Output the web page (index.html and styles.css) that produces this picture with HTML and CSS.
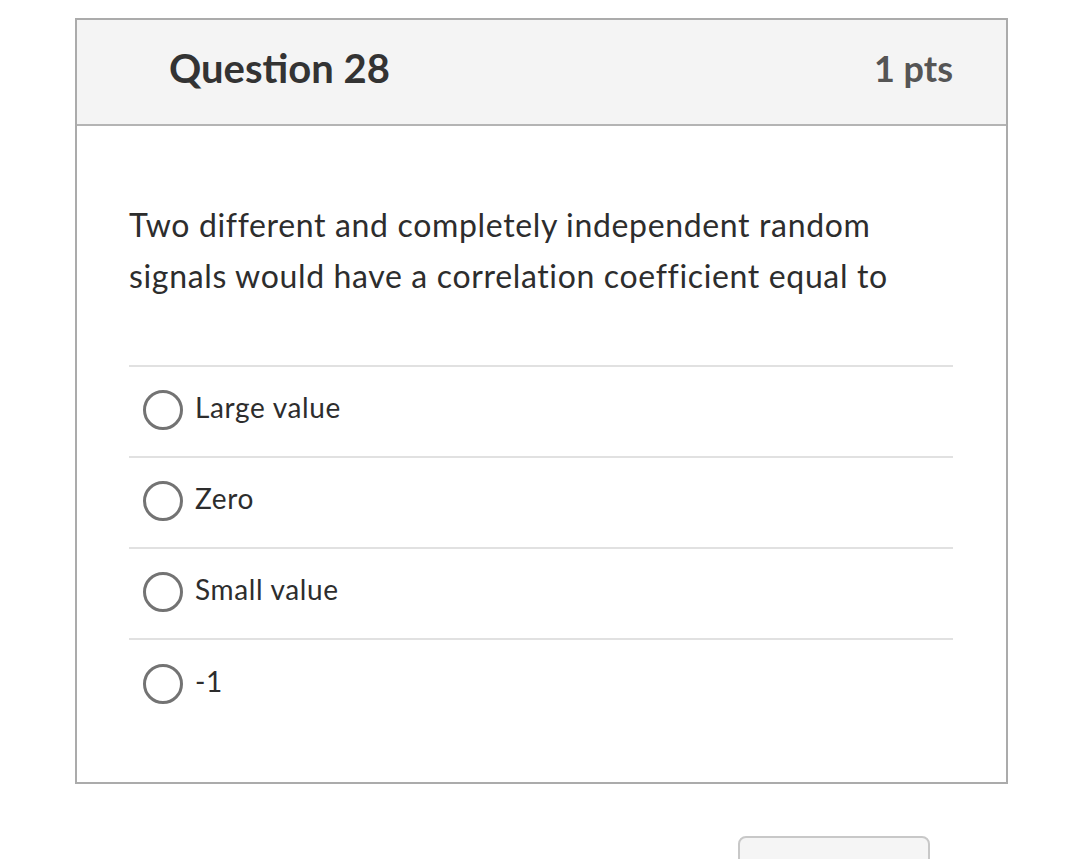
FILE: index.html
```html
<!DOCTYPE html>
<html>
<head>
<meta charset="utf-8">
<link rel="stylesheet" href="styles.css">
</head>
<body>
<div class="card">
  <div class="card-header">
    <div class="title">Question 28</div>
    <div class="pts">1 pts</div>
  </div>
  <div class="card-body">
    <p class="question">Two different and completely independent random signals would have a correlation coefficient equal to</p>
    <div class="answers">
      <label class="answer"><span class="radio"></span><span class="label">Large value</span></label>
      <label class="answer"><span class="radio"></span><span class="label">Zero</span></label>
      <label class="answer"><span class="radio"></span><span class="label">Small value</span></label>
      <label class="answer"><span class="radio"></span><span class="label">-1</span></label>
    </div>
  </div>
</div>
<div class="footer">
  <div class="btn"></div>
</div>
</body>
</html>
```

FILE: styles.css
```css
html, body {
  margin: 0;
  padding: 0;
  background: #fff;
  font-family: Lato, "Open Sans", sans-serif;
  color: #2d2d2d;
}
.card {
  margin: 18px 0 0 75px;
  width: 929px;
  border: 2px solid #ababab;
}
.card-header {
  display: flex;
  justify-content: space-between;
  align-items: center;
  background: #f4f4f4;
  border-bottom: 2px solid #b4b4b4;
  padding: 0 53px 8px 92px;
  box-sizing: border-box;
  height: 106px;
}
.title {
  font-size: 40px;
  font-weight: 700;
  color: #333;
}
.pts {
  font-size: 36px;
  font-weight: 700;
  color: #555;
}
.card-body {
  padding: 73px 53px 51px 52px;
}
.question {
  margin: 0 0 64px 0;
  font-size: 32px;
  letter-spacing: 0.65px;
  line-height: 51px;
  color: #2d2d2d;
}
.answers {
  border-top: 2px solid #e1e1e1;
}
.answer {
  display: flex;
  align-items: center;
  height: 91px;
  box-sizing: border-box;
  padding: 0 0 4px 14px;
  border-bottom: 2px solid #e1e1e1;
}
.answer:last-child {
  border-bottom: none;
}
.radio {
  width: 34px;
  height: 34px;
  border: 3px solid #737373;
  border-radius: 50%;
  flex: none;
}
.label {
  margin-left: 12px;
  font-size: 28px;
  letter-spacing: 0.65px;
  color: #2d2d2d;
  position: relative;
  top: -3px;
}
.footer {
  display: flex;
  padding: 52px 0 0 738px;
}
.btn {
  width: 188px;
  height: 40px;
  background: #f5f5f5;
  border: 2px solid #c8c8c8;
  border-radius: 8px;
}
```
